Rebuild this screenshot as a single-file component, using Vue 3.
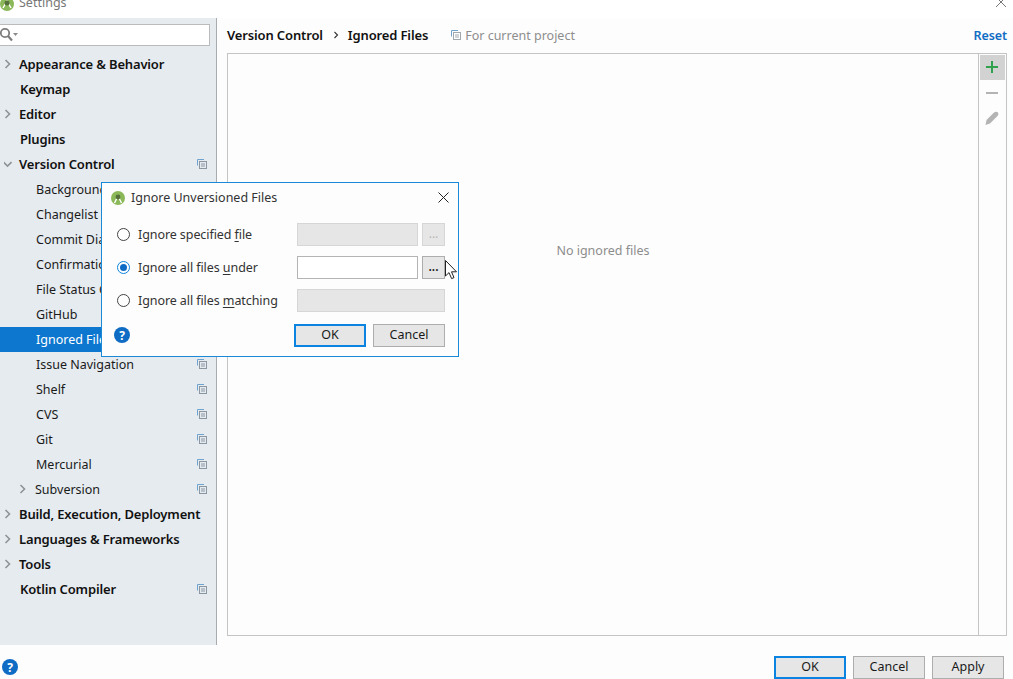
<script setup>
const items = [
  { label: 'Appearance & Behavior', bold: true, arrow: 'right' },
  { label: 'Keymap', bold: true },
  { label: 'Editor', bold: true, arrow: 'right' },
  { label: 'Plugins', bold: true },
  { label: 'Version Control', bold: true, arrow: 'down', copy: true },
  { label: 'Background', child: true, copy: true },
  { label: 'Changelist Conflicts', child: true, copy: true },
  { label: 'Commit Dialog', child: true, copy: true },
  { label: 'Confirmation', child: true, copy: true },
  { label: 'File Status Colors', child: true, copy: true },
  { label: 'GitHub', child: true, copy: true },
  { label: 'Ignored Files', child: true, copy: true, selected: true },
  { label: 'Issue Navigation', child: true, copy: true },
  { label: 'Shelf', child: true, copy: true },
  { label: 'CVS', child: true, copy: true },
  { label: 'Git', child: true, copy: true },
  { label: 'Mercurial', child: true, copy: true },
  { label: 'Subversion', sub: true, arrow: 'right', copy: true },
  { label: 'Build, Execution, Deployment', bold: true, arrow: 'right' },
  { label: 'Languages & Frameworks', bold: true, arrow: 'right' },
  { label: 'Tools', bold: true, arrow: 'right' },
  { label: 'Kotlin Compiler', bold: true, copy: true },
]
</script>

<template>
  <div class="window">
    <header class="titlebar">
      <svg class="app-icon" width="14" height="14" viewBox="0 0 14 14"><circle cx="7" cy="7" r="7" fill="#8bb858"/><path d="M3 11 L7 4 L11 11" fill="none" stroke="#fff" stroke-width="1.5"/><circle cx="7" cy="6" r="2.5" fill="#55703a"/></svg>
      <span class="title-text">Settings</span>
      <svg class="close-main" width="12" height="12" viewBox="0 0 12 12"><path d="M1 1 L11 11 M11 1 L1 11" stroke="#777" stroke-width="1"/></svg>
    </header>

    <div class="body">
      <aside class="sidebar">
        <div class="search">
          <svg width="18" height="16" viewBox="0 0 18 16"><circle cx="5" cy="6" r="4.2" fill="none" stroke="#7d7d7d" stroke-width="1.8"/><path d="M8 9 L12 13.5" stroke="#7d7d7d" stroke-width="2.2"/><path d="M13 6 H18 L15.5 9 Z" fill="#8a8a8a"/></svg>
        </div>
        <ul class="tree">
          <li v-for="it in items" :key="it.label" class="row" :class="{ bold: it.bold, child: it.child, sub: it.sub, selected: it.selected, 'has-arrow': it.arrow }">
            <svg v-if="it.arrow" class="arrow" width="8" height="10" viewBox="0 0 8 10">
              <path v-if="it.arrow === 'right'" d="M1.5 1 L5.5 5 L1.5 9" fill="none" stroke="#8f9396" stroke-width="1.6"/>
              <path v-else d="M-0.5 3 L3.5 7 L7.5 3" fill="none" stroke="#8f9396" stroke-width="1.6"/>
            </svg>
            <span class="label">{{ it.label }}</span>
            <svg v-if="it.copy" class="copy" width="10" height="10" viewBox="0 0 10 10"><path d="M0.5 6.5 V0.5 H7" fill="none" stroke="#6ea3cf"/><rect x="2.5" y="2.5" width="7" height="7" fill="#e6ebf0" stroke="#8a97a3"/><path d="M4 5 H8 M4 7 H8" stroke="#8a97a3"/></svg>
          </li>
        </ul>
      </aside>

      <main class="main">
        <div class="crumbs">
          <span class="crumb">Version Control</span>
          <svg class="crumb-sep" width="6" height="8" viewBox="0 0 6 8"><path d="M1.5 1 L4.5 4 L1.5 7" fill="none" stroke="#333" stroke-width="1.1"/></svg>
          <span class="crumb">Ignored Files</span>
          <svg class="crumb-copy" width="10" height="10" viewBox="0 0 10 10"><path d="M0.5 6.5 V0.5 H7" fill="none" stroke="#6ea3cf"/><rect x="2.5" y="2.5" width="7" height="7" fill="#fff" stroke="#a0a8ae"/><path d="M4 5 H8 M4 7 H8" stroke="#a0a8ae"/></svg>
          <span class="project">For current project</span>
          <span class="reset">Reset</span>
        </div>
        <section class="panel">
          <div class="empty">No ignored files</div>
          <div class="tools">
            <div class="tool active"><svg width="14" height="14" viewBox="0 0 14 14"><path d="M7 1 V13 M1 7 H13" stroke="#2fa24b" stroke-width="2"/></svg></div>
            <div class="tool"><svg width="14" height="14" viewBox="0 0 14 14"><path d="M1 7 H13" stroke="#b4b4b4" stroke-width="2"/></svg></div>
            <div class="tool"><svg width="14" height="14" viewBox="0 0 14 14"><path d="M0.5 14 L1.5 9 L9 1.5 Q11.5 0 13 1.5 Q14 3.5 12.5 5 L5 12.5 Z" fill="#b4b4b4"/></svg></div>
          </div>
        </section>
      </main>
    </div>

    <footer class="footer">
      <svg class="help" width="16" height="16" viewBox="0 0 16 16"><circle cx="8" cy="8" r="8" fill="#0f6cc4"/><text x="8" y="12.5" text-anchor="middle" class="help-q">?</text></svg>
      <div class="actions">
        <button class="btn primary">OK</button>
        <button class="btn">Cancel</button>
        <button class="btn">Apply</button>
      </div>
    </footer>

    <div class="dialog">
      <div class="dlg-title">
        <svg width="14" height="14" viewBox="0 0 14 14"><circle cx="7" cy="7" r="7" fill="#8bb858"/><path d="M3.5 12 L7 5 L10.5 12" fill="none" stroke="#fff" stroke-width="1.4"/><circle cx="7" cy="6" r="2.4" fill="#55703a"/></svg>
        <span class="dlg-name">Ignore Unversioned Files</span>
        <svg class="dlg-close" width="11" height="11" viewBox="0 0 11 11"><path d="M0.5 0.5 L10.5 10.5 M10.5 0.5 L0.5 10.5" stroke="#222" stroke-width="1"/></svg>
      </div>
      <div class="form">
        <span class="radio"></span>
        <span class="flabel">Ignore specified <u>f</u>ile</span>
        <span class="field off"></span>
        <span class="mini off">...</span>

        <span class="radio on"></span>
        <span class="flabel">Ignore all files <u>u</u>nder</span>
        <span class="field"></span>
        <span class="mini">...</span>

        <span class="radio"></span>
        <span class="flabel">Ignore all files <u>m</u>atching</span>
        <span class="field off wide"></span>
      </div>
      <div class="dlg-foot">
        <svg width="16" height="16" viewBox="0 0 16 16"><circle cx="8" cy="8" r="8" fill="#0f6cc4"/><text x="8" y="12.5" text-anchor="middle" class="help-q">?</text></svg>
        <div class="dlg-actions">
          <button class="btn primary">OK</button>
          <button class="btn">Cancel</button>
        </div>
      </div>
    </div>

    <svg class="cursor" width="13" height="20" viewBox="0 0 13 20"><path d="M0.5 0.5 V16 L4 12.6 L6.6 18.6 L9 17.6 L6.5 11.8 H11.5 Z" fill="#fff" stroke="#222" stroke-width="1"/></svg>
  </div>
</template>

<style>
html, body { margin: 0; background: #fff; }
</style>

<style scoped>
.window {
  position: relative;
  width: 1013px;
  height: 679px;
  overflow: hidden;
  background: #fdfdfd;
  display: flex;
  flex-direction: column;
  font-family: "Noto Sans", "Open Sans", sans-serif;
  font-size: 12.5px;
  color: #1a1a1a;
}
.titlebar {
  height: 18px;
  flex: none;
  display: flex;
  align-items: flex-end;
  gap: 5px;
  overflow: hidden;
  background: #fff;
  position: relative;
}
.app-icon { margin-bottom: 7px; flex: none; }
.title-text { color: #777; line-height: 18px; margin-bottom: 6px; }
.close-main { position: absolute; right: 6px; top: -4px; }
.body { flex: 1; display: flex; min-height: 0; }
.sidebar {
  width: 216px;
  flex: none;
  height: 621px;
  background: #e6ebf0;
  border-right: 1px solid #a9acae;
  padding-top: 6px;
}
.search {
  width: 209px;
  height: 20px;
  background: #fff;
  border: 1px solid #bbb;
  border-left: 0;
  display: flex;
  align-items: center;
}
.tree { list-style: none; margin: 6px 0 0; padding: 0; }
.row {
  height: 25px;
  display: flex;
  align-items: center;
  padding-left: 20px;
  box-sizing: border-box;
  position: relative;
  white-space: nowrap;
}
.row.has-arrow { padding-left: 19px; }
.row.bold { padding-bottom: 2px; }
.row.bold .label { font-weight: 600; font-size: 13px; letter-spacing: -0.16px; color: #111; }
.row.child { padding-left: 36px; }
.row.sub { padding-left: 35px; }
.row.selected { background: #0d77cf; color: #fff; }
.arrow { position: absolute; left: 4px; top: 7px; }
.row.sub .arrow { left: 19px; }
.copy { position: absolute; left: 197px; top: 7px; }
.main { flex: 1; display: flex; flex-direction: column; padding: 0 6px 0 10px; min-width: 0; }
.crumbs {
  height: 35px;
  flex: none;
  display: flex;
  align-items: center;
  padding-bottom: 1px;
  box-sizing: border-box;
}
.crumb { font-weight: 600; font-size: 13px; letter-spacing: -0.14px; color: #111; }
.crumb-sep { margin: 0 9px 0 10px; }
.crumb-copy { margin: 0 4px 0 23px; }
.project { color: #8d8d8d; }
.reset { margin-left: auto; color: #0f6cc4; font-weight: 600; font-size: 12.5px; letter-spacing: -0.1px; }
.panel {
  height: 583px;
  flex: none;
  display: flex;
  border: 1px solid #c4c4c4;
  box-sizing: border-box;
  background: #fdfdfd;
}
.empty { flex: 1; text-align: center; color: #8d8d8d; padding-top: 188px; }
.tools {
  width: 27px;
  flex: none;
  border-left: 1px solid #c4c4c4;
  display: flex;
  flex-direction: column;
  align-items: center;
  padding-top: 1px;
}
.tool { width: 25px; height: 25px; display: flex; align-items: center; justify-content: center; padding-right: 1px; box-sizing: border-box; }
.tool.active { background: #d2d2d2; padding-bottom: 1px; }
.footer {
  position: absolute;
  left: 0; right: 0; bottom: 0;
  height: 34px;
  display: flex;
  align-items: flex-end;
  padding: 0 9px 0 2px;
  box-sizing: border-box;
}
.help { margin-bottom: 4px; }
.help-q { fill: #fff; font: 700 12px "Noto Sans", sans-serif; }
.actions { margin-left: auto; display: flex; gap: 7px; }
.btn {
  width: 72px;
  height: 23px;
  padding: 0 0 2px;
  border: 1px solid #adadad;
  background: #e6e6e6;
  font: inherit;
  color: #1a1a1a;
  box-sizing: border-box;
}
.btn.primary { border: 2px solid #0a84e0; }

.dialog {
  position: absolute;
  left: 101px;
  top: 182px;
  width: 358px;
  height: 175px;
  box-sizing: border-box;
  border: 1px solid #1a8ad8;
  background: #fdfdfd;
  display: flex;
  flex-direction: column;
  padding: 0 13px 9px 12px;
}
.dlg-title {
  height: 29px;
  display: flex;
  align-items: center;
  gap: 6px;
  margin-left: -3px;
  flex: none;
  color: #333;
}
.dlg-close { margin-left: auto; margin-right: -4px; }
.form {
  margin-top: 11px;
  display: grid;
  grid-template-columns: 24px 159px 121px 27px;
  grid-auto-rows: 23px;
  row-gap: 10px;
  align-items: center;
}
.radio {
  width: 13px;
  height: 13px;
  border-radius: 50%;
  border: 1px solid #444;
  box-sizing: border-box;
  margin-left: 3px;
  background: #fff;
  position: relative;
}
.radio.on { border-color: #0a84e0; }
.radio.on::after {
  content: "";
  position: absolute;
  inset: 2px;
  border-radius: 50%;
  background: #0f6cc4;
}
.flabel { color: #333; white-space: nowrap; letter-spacing: -0.08px; }
.flabel u { text-underline-offset: 2px; }
.field {
  height: 23px;
  background: #fff;
  border: 1px solid #b4b4b4;
  box-sizing: border-box;
}
.field.off { background: #e6e6e6; border-color: #d6d6d6; }
.field.wide { grid-column: span 2; }
.mini {
  width: 23px;
  height: 23px;
  box-sizing: border-box;
  border: 1px solid #adadad;
  background: #e6e6e6;
  text-align: center;
  line-height: 19px;
  font-size: 12px;
  font-weight: 600;
  justify-self: end;
}
.mini.off { border-color: #d6d6d6; color: #b5b5b5; font-weight: 400; }
.dlg-foot {
  margin-top: auto;
  display: flex;
  align-items: center;
}
.dlg-foot svg { margin-top: -2px; }
.dlg-actions { margin-left: auto; display: flex; gap: 7px; }
.cursor { position: absolute; left: 445px; top: 260px; }
</style>
